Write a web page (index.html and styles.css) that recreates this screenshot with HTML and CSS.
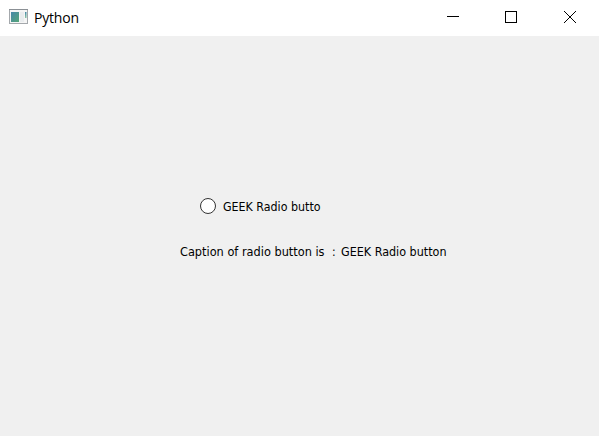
FILE: index.html
```html
<!DOCTYPE html>
<html lang="en">
<head>
<meta charset="utf-8">
<title>Python</title>
<link rel="stylesheet" href="styles.css">
</head>
<body>
<div class="window">
  <header class="titlebar">
    <svg class="app-icon" width="20" height="16" viewBox="0 0 20 16">
      <defs>
        <linearGradient id="pane" x1="0" y1="0" x2="1" y2="1"><stop offset="0" stop-color="#4787a8"/><stop offset="1" stop-color="#55a578"/></linearGradient>
        <linearGradient id="stripe" x1="0" y1="0" x2="0" y2="1"><stop offset="0" stop-color="#4787a8"/><stop offset="1" stop-color="#8cc6a4"/></linearGradient>
      </defs>
      <rect x=".5" y=".5" width="18" height="14" fill="#f5f5f5" stroke="#a4a8ac"/>
      <path d="M0 .5h19" stroke="#8b9095"/>
      <rect x="2" y="3" width="8" height="10" fill="url(#pane)"/>
      <rect x="11" y="3" width="4" height="10" fill="#e9ecee"/>
      <rect x="16" y="3" width="1.5" height="6" fill="url(#stripe)"/>
    </svg>
    <h1 class="title">Python</h1>
    <div class="controls">
      <svg class="control" width="58" height="36" viewBox="0 0 58 36"><path d="M18 16.5h12"/></svg>
      <svg class="control" width="58" height="36" viewBox="0 0 58 36"><rect x="18.5" y="11.5" width="11" height="11"/></svg>
      <svg class="control" width="54" height="36" viewBox="0 0 54 36"><path d="M19 11l12 12M31 11l-12 12"/></svg>
    </div>
  </header>
  <main class="content">
    <label class="radio">
      <svg class="radio-mark" width="18" height="18" viewBox="0 0 18 18"><circle cx="9" cy="9" r="7.5"/></svg>
      <svg class="label-text" width="100" height="18"><text x="0" y="14" textLength="97.5" lengthAdjust="spacingAndGlyphs">GEEK Radio butto</text></svg>
    </label>
    <svg class="caption label-text" width="270" height="18"><text x="0" y="14" textLength="144.5" lengthAdjust="spacingAndGlyphs">Caption of radio button is</text><text x="152" y="14">:</text><text x="161" y="14" textLength="105.5" lengthAdjust="spacingAndGlyphs">GEEK Radio button</text></svg>
  </main>
</div>
</body>
</html>
```
FILE: styles.css
```css
body { margin: 0; font-family: "Open Sans", "Noto Sans", sans-serif; color: #000; }
.window { width: 599px; height: 436px; background: #f0f0f0; overflow: hidden; }
.titlebar { display: flex; height: 36px; background: #fff; }
.app-icon { margin: 9px 0 0 9px; }
.title { margin: 0 0 0 5px; font-size: 14px; font-weight: 400; line-height: 36px; letter-spacing: -.2px; }
.controls { display: flex; margin-left: auto; }
.control { fill: none; stroke: #000; stroke-width: 1; }
.content { display: flex; flex-direction: column; align-items: flex-start; padding: 161px 0 0 180px; }
.radio { display: flex; gap: 6px; margin-left: 19px; }
.radio-mark { fill: #fff; stroke: #333; }
.caption { margin-top: 27px; }
.label-text { display: block; font-family: "DejaVu Sans Condensed", "DejaVu Sans", sans-serif; font-stretch: condensed; font-size: 12px; }
```
